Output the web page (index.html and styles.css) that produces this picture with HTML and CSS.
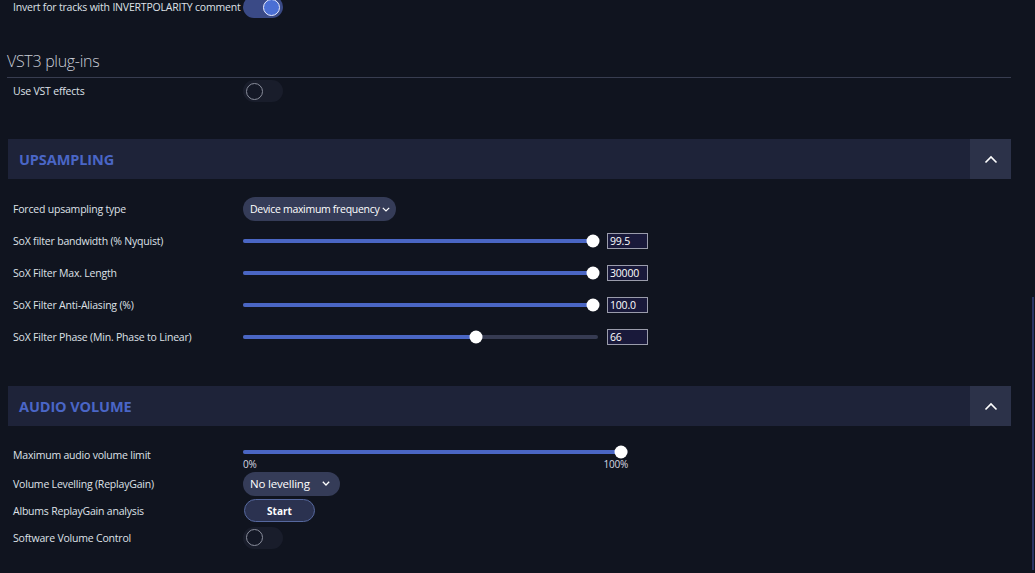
FILE: index.html
```html
<!DOCTYPE html>
<html lang="en">
  <head>
    <meta charset="UTF-8" />
    <meta name="viewport" content="width=device-width, initial-scale=1.0" />
    <title>Settings - Audio</title>
    <link rel="stylesheet" href="styles.css">
  </head>

  <body>
    <div class="page">
      <div class="row row-top">
        <div class="label">Invert for tracks with INVERTPOLARITY comment</div>
        <div class="toggle on"><span class="knob"></span></div>
      </div>

      <h2 class="group-title">VST3 plug-ins</h2>
      <div class="row row-vst">
        <div class="label">Use VST effects</div>
        <div class="toggle"><span class="knob"></span></div>
      </div>

      <!-- Upsampling -->
      <div class="section-bar first">
        <div class="section-title">UPSAMPLING</div>
        <button class="collapse-btn">
          <svg width="14" height="9" viewBox="0 0 14 9"><path d="M1.5 7.5 L7 2 L12.5 7.5" fill="none" stroke="#ffffff" stroke-width="1.6"/></svg>
        </button>
      </div>
      <div class="section-body up-body">
        <div class="row">
          <div class="label">Forced upsampling type</div>
          <div class="dropdown dd-device">Device maximum frequency
            <svg class="chev" width="8" height="5" viewBox="0 0 8 5"><path d="M0.8 0.8 L4 4 L7.2 0.8" fill="none" stroke="#ffffff" stroke-width="1.2"/></svg>
          </div>
        </div>
        <div class="row">
          <div class="label">SoX filter bandwidth (% Nyquist)</div>
          <div class="slider sl-short">
            <div class="fill" style="width: 98.6%"></div>
            <div class="thumb" style="left: 98.6%"></div>
          </div>
          <div class="num">99.5</div>
        </div>
        <div class="row">
          <div class="label">SoX Filter Max. Length</div>
          <div class="slider sl-short">
            <div class="fill" style="width: 98.6%"></div>
            <div class="thumb" style="left: 98.6%"></div>
          </div>
          <div class="num">30000</div>
        </div>
        <div class="row">
          <div class="label">SoX Filter Anti-Aliasing (%)</div>
          <div class="slider sl-short">
            <div class="fill" style="width: 98.6%"></div>
            <div class="thumb" style="left: 98.6%"></div>
          </div>
          <div class="num">100.0</div>
        </div>
        <div class="row">
          <div class="label">SoX Filter Phase (Min. Phase to Linear)</div>
          <div class="slider sl-short">
            <div class="fill" style="width: 65.6%"></div>
            <div class="thumb" style="left: 65.6%"></div>
          </div>
          <div class="num">66</div>
        </div>
      </div>

      <!-- Audio volume -->
      <div class="section-bar">
        <div class="section-title">AUDIO VOLUME</div>
        <button class="collapse-btn">
          <svg width="14" height="9" viewBox="0 0 14 9"><path d="M1.5 7.5 L7 2 L12.5 7.5" fill="none" stroke="#ffffff" stroke-width="1.6"/></svg>
        </button>
      </div>
      <div class="section-body vol-body">
        <div class="row row-volume">
          <div class="label">Maximum audio volume limit</div>
          <div class="slider-wrap">
            <div class="slider sl-long">
              <div class="fill" style="width: 98.2%"></div>
              <div class="thumb" style="left: 98.2%"></div>
            </div>
            <div class="ticks"><span>0%</span><span>100%</span></div>
          </div>
        </div>
        <div class="row row-small">
          <div class="label">Volume Levelling (ReplayGain)</div>
          <div class="dropdown dd-level">No levelling
            <svg class="chev" width="8" height="5" viewBox="0 0 8 5"><path d="M0.8 0.8 L4 4 L7.2 0.8" fill="none" stroke="#ffffff" stroke-width="1.3"/></svg>
          </div>
        </div>
        <div class="row row-small">
          <div class="label">Albums ReplayGain analysis</div>
          <button class="btn-start">Start</button>
        </div>
        <div class="row row-small">
          <div class="label">Software Volume Control</div>
          <div class="toggle"><span class="knob"></span></div>
        </div>
      </div>
    </div>

    <div class="scrollbar"></div>
  </body>
</html>
```

FILE: styles.css
```css
* {
  margin: 0;
  padding: 0;
  box-sizing: border-box;
}

body {
  font-family: 'Open Sans', 'Noto Sans', sans-serif;
  background: #10141f;
  color: #e4e6ee;
  font-size: 10.5px;
  letter-spacing: -0.2px;
  overflow: hidden;
  height: 573px;
}

.page {
  padding: 0 24px 0 8px;
  margin-top: -4px;
}

.row {
  display: flex;
  align-items: center;
  height: 32px;
}

.label {
  width: 235px;
  padding-left: 5px;
  flex-shrink: 0;
  color: #dfe1e8;
  white-space: nowrap;
}

.row-top {
  height: 22px;
}

.row-vst {
  height: 26px;
}

/* Toggles */
.toggle {
  width: 40px;
  height: 22px;
  border-radius: 11px;
  background: #191d2b;
  display: flex;
  align-items: center;
  padding: 0 3px;
}

.toggle .knob {
  width: 17px;
  height: 17px;
  border-radius: 50%;
  border: 1.5px solid #8a8e9c;
  background: #141826;
}

.toggle.on {
  background: #3a4a86;
  justify-content: flex-end;
}

.toggle.on .knob {
  background: #4b6fd4;
  border-color: #e8ecff;
}

/* Group heading */
.group-title {
  font-size: 16px;
  font-weight: 300;
  letter-spacing: -0.3px;
  color: #c9ccd6;
  line-height: 24px;
  margin: 31px 0 0 -1px;
  padding-bottom: 4px;
  border-bottom: 1px solid #383d50;
}

/* Section bars */
.section-bar {
  display: flex;
  align-items: stretch;
  height: 40px;
  background: #1e2339;
  margin-top: 33px;
}

.section-bar.first {
  margin-top: 35px;
}

.section-title {
  flex: 1;
  display: flex;
  align-items: center;
  padding-left: 11px;
  font-size: 14.5px;
  font-weight: 700;
  color: #4a66c6;
  letter-spacing: -0.1px;
}

.collapse-btn {
  width: 41px;
  border: none;
  background: #2c3249;
  display: flex;
  align-items: center;
  justify-content: center;
  cursor: pointer;
}

.up-body {
  padding-top: 14px;
}

.vol-body {
  padding-top: 14px;
}

/* Dropdowns */
.dropdown {
  display: inline-flex;
  align-items: center;
  height: 24px;
  border-radius: 12px;
  background: #353c58;
  color: #ffffff;
  font-size: 10.5px;
  white-space: nowrap;
  padding: 0 7px;
}

.dd-device {
  gap: 3px;
  padding: 0 6px 0 7px;
  letter-spacing: -0.3px;
}

.dd-level {
  width: 97px;
  justify-content: space-between;
  padding: 0 10px 0 7px;
  font-size: 11.5px;
}

/* Sliders */
.slider {
  position: relative;
  height: 4px;
  border-radius: 2px;
  background: #363b52;
}

.sl-short {
  width: 355px;
}

.sl-long {
  width: 385px;
}

.slider .fill {
  height: 100%;
  border-radius: 2px;
  background: #4a66c4;
}

.slider .thumb {
  position: absolute;
  top: 50%;
  width: 13px;
  height: 13px;
  border-radius: 50%;
  background: #ffffff;
  transform: translate(-50%, -50%);
}

.num {
  margin-left: 9px;
  width: 41px;
  height: 16px;
  border: 1px solid #9a9cab;
  background: #19193a;
  color: #ffffff;
  font-size: 10.5px;
  line-height: 14px;
  padding-left: 2px;
}

.row-volume {
  height: 30px;
}

.slider-wrap {
  width: 385px;
  padding-top: 9px;
}

.ticks {
  display: flex;
  justify-content: space-between;
  font-size: 10px;
  line-height: 11px;
  margin-top: 5px;
  color: #d8dae2;
}

.row-small {
  height: 27px;
}

.btn-start {
  width: 71px;
  height: 23px;
  border-radius: 12px;
  border: 1.5px solid #56689e;
  background: #2b3250;
  color: #ffffff;
  font-family: inherit;
  font-size: 10px;
  font-weight: 700;
  margin-left: 1px;
}

.scrollbar {
  position: absolute;
  right: 1px;
  top: 297px;
  width: 2px;
  height: 273px;
  background: #2a3564;
}
```
